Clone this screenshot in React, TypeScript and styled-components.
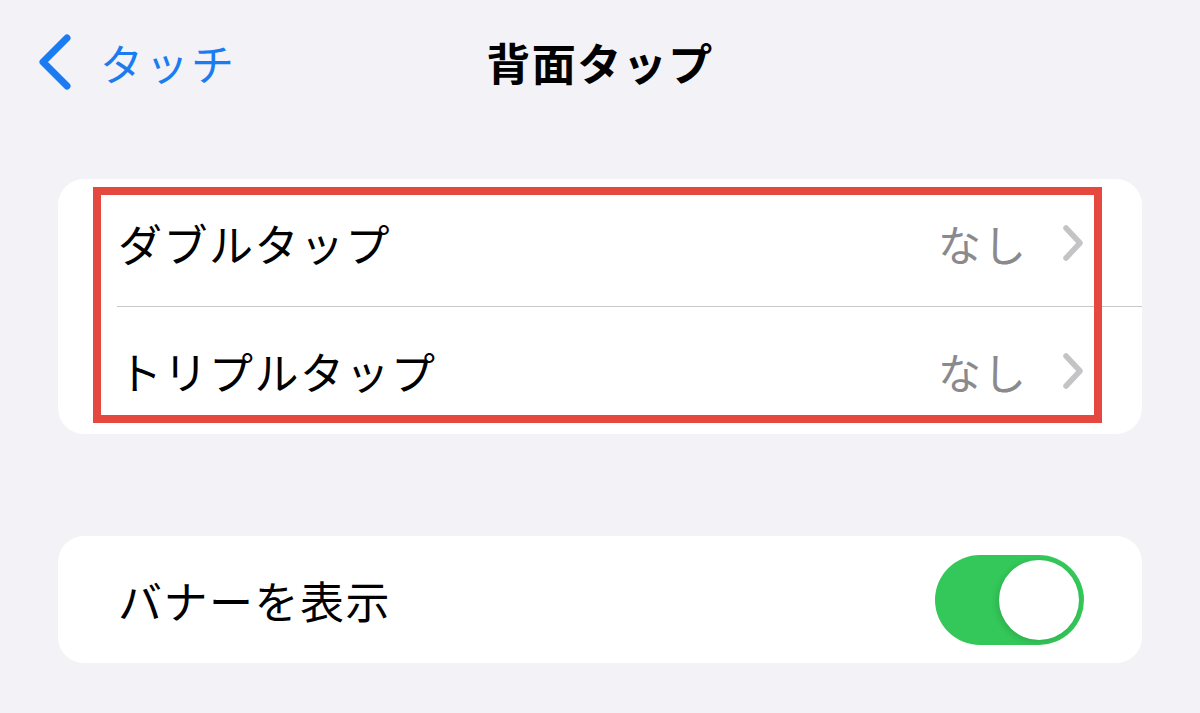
import React from "react";
import styled, { createGlobalStyle } from "styled-components";

const Global = createGlobalStyle`
  html, body { margin: 0; padding: 0; background: #f2f2f7; }
  body { font-family: "Noto Sans CJK JP", "Noto Sans", sans-serif; }
`;

const Page = styled.div`
  width: 1200px;
  height: 713px;
  background: #f2f2f7;
  overflow: hidden;
`;

const NavBar = styled.header`
  height: 126px;
  display: grid;
  grid-template-columns: 1fr auto 1fr;
  align-items: center;
  padding: 0 38px;
  box-sizing: border-box;
`;

const Back = styled.div`
  display: flex;
  align-items: center;
  gap: 28px;
  color: #1a7cf0;
  font-size: 43px;
  letter-spacing: 2.5px;
  margin-top: -3px;
`;

const Title = styled.h1`
  margin: -3px 0 0;
  font-size: 44px;
  font-weight: 700;
  color: #000;
  letter-spacing: 1.5px;
`;

const Card = styled.section<{ $top: number }>`
  position: relative;
  margin: ${(p) => p.$top}px 58px 0;
  background: #fff;
  border-radius: 26px;
  overflow: hidden;
`;

const Row = styled.div`
  height: 127px;
  display: flex;
  align-items: center;
  justify-content: space-between;
  padding: 0 58px 0 60px;
`;

const Label = styled.span`
  font-size: 44px;
  color: #000;
  letter-spacing: 1.5px;
`;

const Detail = styled.div`
  display: flex;
  align-items: center;
  gap: 34px;
  color: #8a8a8e;
  font-size: 43px;
  letter-spacing: 2px;
`;

const Separator = styled.div`
  height: 1px;
  background: #c8c8cc;
  margin-left: 59px;
`;

const Highlight = styled.div`
  position: absolute;
  left: 35px;
  top: 8px;
  right: 40px;
  bottom: 11px;
  border: 8px solid #e4483e;
  pointer-events: none;
`;

const Switch = styled.div<{ $on: boolean }>`
  width: 149px;
  height: 90px;
  border-radius: 45px;
  background: ${(p) => (p.$on ? "#34c759" : "#e9e9eb")};
  display: flex;
  align-items: center;
  justify-content: ${(p) => (p.$on ? "flex-end" : "flex-start")};
  padding: 0 5px;
  box-sizing: border-box;
`;

const Knob = styled.div`
  width: 80px;
  height: 80px;
  border-radius: 50%;
  background: #fff;
  box-shadow: -2px 2px 6px rgba(0, 0, 0, 0.12);
`;

const BackChevron = () => (
  <svg width="34" height="56" viewBox="0 0 34 56">
    <path d="M29 4 L5 28 L29 52" fill="none" stroke="#1a7cf0" strokeWidth="7" strokeLinecap="round" strokeLinejoin="round" />
  </svg>
);

const Chevron = () => (
  <svg width="22" height="36" viewBox="0 0 22 36">
    <path d="M4 3 L18 18 L4 33" fill="none" stroke="#c4c4c7" strokeWidth="5.5" strokeLinecap="round" strokeLinejoin="round" />
  </svg>
);

const items = ["ダブルタップ", "トリプルタップ"];

export default function App() {
  return (
    <Page>
      <Global />
      <NavBar>
        <Back>
          <BackChevron />
          <span>タッチ</span>
        </Back>
        <Title>背面タップ</Title>
        <div />
      </NavBar>
      <Card $top={53}>
        {items.map((t, i) => (
          <React.Fragment key={t}>
            {i > 0 && <Separator />}
            <Row>
              <Label>{t}</Label>
              <Detail>
                <span>なし</span>
                <Chevron />
              </Detail>
            </Row>
          </React.Fragment>
        ))}
        <Highlight />
      </Card>
      <Card $top={102}>
        <Row>
          <Label>バナーを表示</Label>
          <Switch $on>
            <Knob />
          </Switch>
        </Row>
      </Card>
    </Page>
  );
}
